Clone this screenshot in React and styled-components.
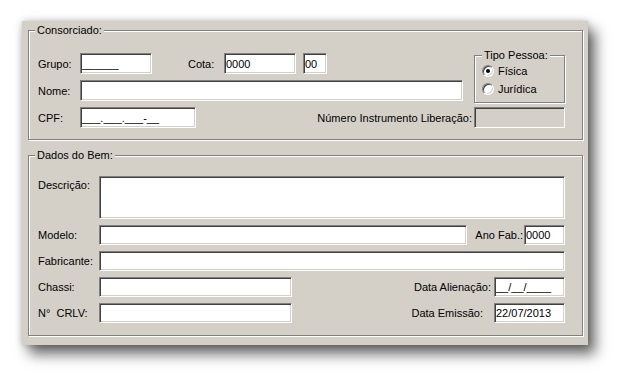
import React from 'react';
import styled, {createGlobalStyle} from 'styled-components';

const GlobalStyle = createGlobalStyle`
  body {
    margin: 0;
    background: #fff;
    font-family: "Liberation Sans", Arial, sans-serif;
    font-size: 11px;
    color: #000;
  }
  #root {
    padding-bottom: 30px;
  }
`;

const Panel = styled.div`
  margin: 21px 0 0 22px;
  width: 566px;
  box-sizing: border-box;
  padding: 3px 5px 9px 6px;
  background: #d4d0c8;
  box-shadow: 7px 9px 13px rgba(0, 0, 0, 0.6), 0 0 7px rgba(0, 0, 0, 0.22);
`;

const Group = styled.fieldset`
  margin: ${p => p.$gap || 0}px 0 0 0;
  padding: ${p => p.$pad};
  min-width: 0;
  border: 1px solid #808080;
  box-shadow: inset 1px 1px 0 #fff, 1px 1px 0 #fff;
`;

const Legend = styled.legend`
  margin-left: ${p => p.$shift || 0}px;
  padding: 0 2px;
  line-height: 13px;
  background: #d4d0c8;
`;

const Label = styled.span`
  white-space: pre;
  align-self: ${p => (p.$top ? 'start' : 'center')};
  padding-top: ${p => (p.$top ? 3 : 0)}px;
  margin: ${p => p.$m || 0};
`;

const TopGrid = styled.div`
  display: grid;
  grid-template-columns: 42px 1fr 11px 91px;
  grid-auto-rows: 21px;
  row-gap: 6px;
  align-items: center;

  & > ${Label} {
    grid-column: 1;
  }
`;

const BottomGrid = styled.div`
  display: grid;
  grid-template-columns: 61px 1fr;
  grid-template-rows: 43px;
  grid-auto-rows: 20px;
  row-gap: 6px;
  align-items: center;
`;

const Line = styled.div`
  display: flex;
  align-items: center;
  grid-column: ${p => p.$span || 'auto'};
  height: 100%;
`;

const Field = styled.input`
  box-sizing: border-box;
  width: ${p => (p.$w ? `${p.$w}px` : 'auto')};
  min-width: 0;
  flex: ${p => (p.$w ? 'none' : 1)};
  height: 100%;
  margin: ${p => p.$m || 0};
  padding: 0 1px;
  font: 11px "Liberation Sans", Arial, sans-serif;
  color: #000;
  background: ${p => (p.disabled ? '#d4d0c8' : '#fff')};
  border: 1px solid;
  border-color: #808080 #fff #fff #808080;
  box-shadow: inset 1px 1px 0 #404040, inset -1px -1px 0 #d4d0c8;
  outline: none;
`;

const Memo = styled(Field).attrs({as: 'textarea'})`
  resize: none;
  overflow: hidden;
`;

const Spacer = styled.div`
  flex: 1;
`;

const TipoBox = styled.fieldset`
  grid-column: 4;
  grid-row: 1 / 3;
  align-self: start;
  box-sizing: border-box;
  height: 54px;
  margin: -4px 0 0 0;
  padding: 0 4px 0 7px;
  min-width: 0;
  border: 1px solid #808080;
  box-shadow: inset 1px 1px 0 #fff, 1px 1px 0 #fff;
`;

const RadioRow = styled.label`
  display: flex;
  align-items: center;
  height: 18px;
  gap: 4px;
`;

const RadioDot = styled.span`
  position: relative;
  box-sizing: border-box;
  width: 12px;
  height: 12px;
  border-radius: 50%;
  border: 1px solid;
  border-color: #808080 #fff #fff #808080;
  box-shadow: inset 1px 1px 0 #404040, inset -1px -1px 0 #d4d0c8;
  background: #fff;

  &::after {
    content: '';
    display: ${p => (p.$on ? 'block' : 'none')};
    position: absolute;
    left: 3px;
    top: 3px;
    width: 4px;
    height: 4px;
    border-radius: 50%;
    background: #000;
  }
`;

function Radio({on, children}) {
  return (
    <RadioRow>
      <RadioDot $on={on} />
      {children}
    </RadioRow>
  );
}

export default function App() {
  return (
    <>
      <GlobalStyle />
      <Panel>
        <Group $pad="16px 17px 11px 9px">
          <Legend $shift={-3}>Consorciado:</Legend>
          <TopGrid>
            <Label>Grupo:</Label>
            <Line>
              <Field $w={72} defaultValue="______" />
              <Label $m="0 0 0 36px" style={{width: 36}}>Cota:</Label>
              <Field $w={72} defaultValue="0000" />
              <Field $w={24} $m="0 0 0 7px" defaultValue="00" />
            </Line>
            <TipoBox>
              <Legend>Tipo Pessoa:</Legend>
              <Radio on>Física</Radio>
              <Radio>Jurídica</Radio>
            </TipoBox>
            <Label>Nome:</Label>
            <Line>
              <Field />
            </Line>
            <Label>CPF:</Label>
            <Line $span="2 / 4">
              <Field $w={116} defaultValue="___.___.___-__" />
              <Spacer />
              <Label $m="0 2px 0 0">Número Instrumento Liberação:</Label>
            </Line>
            <Line $span="4">
              <Field disabled />
            </Line>
          </TopGrid>
        </Group>
        <Group $gap={9} $pad="14px 17px 12px 9px">
          <Legend $shift={-3}>Dados do Bem:</Legend>
          <BottomGrid>
            <Label $top>Descrição:</Label>
            <Memo />
            <Label>Modelo:</Label>
            <Line>
              <Field />
              <Label $m="0 1px 0 8px">Ano Fab.:</Label>
              <Field $w={41} defaultValue="0000" />
            </Line>
            <Label>Fabricante:</Label>
            <Line>
              <Field />
            </Line>
            <Label>Chassi:</Label>
            <Line>
              <Field $w={193} />
              <Spacer />
              <Label $m="0 3px 0 0">Data Alienação:</Label>
              <Field $w={71} defaultValue="__/__/____" />
            </Line>
            <Label>N°  CRLV:</Label>
            <Line>
              <Field $w={193} />
              <Spacer />
              <Label $m="0 11px 0 0">Data Emissão:</Label>
              <Field $w={71} defaultValue="22/07/2013" />
            </Line>
          </BottomGrid>
        </Group>
      </Panel>
    </>
  );
}
